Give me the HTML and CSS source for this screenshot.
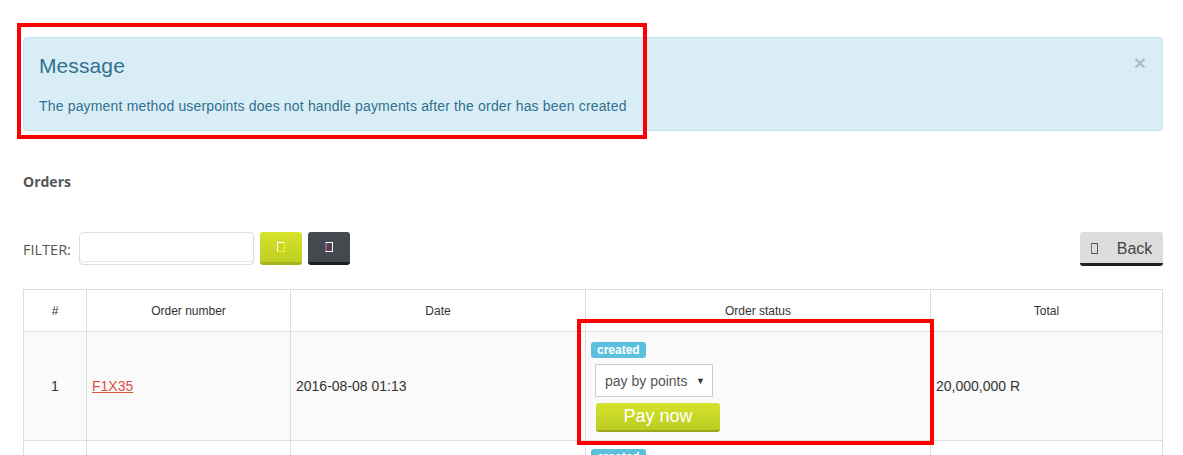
FILE: index.html
```html
<!DOCTYPE html>
<html>
<head>
<meta charset="utf-8">
<link rel="stylesheet" href="styles.css">
</head>
<body>
<div class="page">
  <div class="alert">
    <button class="close">×</button>
    <h4 class="alert-title">Message</h4>
    <p class="alert-text">The payment method userpoints does not handle payments after the order has been created</p>
    <div class="mark mark-alert"></div>
  </div>

  <h3 class="section-title">Orders</h3>

  <div class="toolbar">
    <div class="filter">
      <label class="filter-label">FILTER:</label>
      <input class="filter-input" type="text">
      <button class="btn btn-lime btn-icon"><span class="tofu tofu-light"></span></button>
      <button class="btn btn-dark btn-icon"><span class="tofu tofu-dark"></span></button>
    </div>
    <button class="btn btn-back"><span class="tofu tofu-back"></span><span>Back</span></button>
  </div>

  <table class="orders">
    <thead>
      <tr>
        <th class="c-num">#</th>
        <th class="c-order">Order number</th>
        <th class="c-date">Date</th>
        <th class="c-status">Order status</th>
        <th class="c-total">Total</th>
      </tr>
    </thead>
    <tbody>
      <tr class="row1">
        <td class="center">1</td>
        <td><a class="order-link" href="#">F1X35</a></td>
        <td>2016-08-08 01:13</td>
        <td class="status-cell">
          <div class="status-wrap">
            <span class="badge">created</span>
            <div class="select"><span>pay by points</span><span class="caret">▼</span></div>
            <button class="btn-pay">Pay now</button>
            <div class="mark mark-status"></div>
          </div>
        </td>
        <td>20,000,000 R</td>
      </tr>
      <tr class="row2">
        <td></td>
        <td></td>
        <td></td>
        <td class="status-cell"><div class="status-wrap2"><span class="badge">created</span></div></td>
        <td></td>
      </tr>
    </tbody>
  </table>
</div>
</body>
</html>
```

FILE: styles.css
```css
html, body {
  margin: 0;
  padding: 0;
  background: #fff;
  overflow: hidden;
  height: 455px;
}
body {
  font-family: "Liberation Sans", Arial, sans-serif;
  color: #333;
}
.page {
  padding: 37px 20px 0 23px;
}
.alert {
  position: relative;
  background: #d9edf7;
  border: 1px solid #bce8f1;
  border-radius: 4px;
  padding: 15px;
  color: #31708f;
  height: 62px;
}
.alert-title {
  margin: 0;
  font-size: 21px;
  font-weight: normal;
  line-height: 26px;
  letter-spacing: 0.1px;
}
.alert-text {
  margin: 17px 0 0;
  font-size: 14px;
  line-height: 20px;
  letter-spacing: 0.17px;
}
.close {
  position: absolute;
  right: 16px;
  top: 14px;
  border: 0;
  background: none;
  padding: 0;
  font-family: "Liberation Sans", Arial, sans-serif;
  font-size: 21px;
  font-weight: bold;
  line-height: 22px;
  color: #000;
  opacity: 0.2;
}
.mark {
  position: absolute;
  border: 4px solid #ff0000;
  pointer-events: none;
}
.mark-alert {
  left: -7px;
  top: -15px;
  width: 622px;
  height: 108px;
}
.section-title {
  margin: 41px 0 0;
  font-family: "Open Sans", sans-serif;
  font-size: 14px;
  font-weight: bold;
  color: #555;
  line-height: 20px;
}
.toolbar {
  display: flex;
  justify-content: space-between;
  align-items: flex-start;
  margin-top: 40px;
}
.filter {
  display: flex;
  align-items: center;
}
.filter-label {
  font-family: "Open Sans", sans-serif;
  font-size: 14.5px;
  color: #555;
  margin-right: 8px;
  margin-top: 2px;
}
.filter-input {
  width: 175px;
  height: 33px;
  box-sizing: border-box;
  border: 1px solid #ddd;
  border-radius: 4px;
  box-shadow: 0 -2px 0 #fff inset, 0 -3px 0 #e5e5e5 inset;
  margin: 0;
  padding: 0 6px;
}
.btn {
  border: 0;
  border-radius: 3px;
  padding: 0;
  margin: 0;
  cursor: pointer;
  display: flex;
  align-items: center;
  justify-content: center;
}
.btn-icon {
  width: 42px;
  height: 33px;
  box-sizing: border-box;
  margin-left: 6px;
}
.btn-lime {
  background: linear-gradient(#d6e32b, #bfcf22);
  border-bottom: 3px solid #a5b31a;
}
.btn-dark {
  background: #45484f;
  border-bottom: 3px solid #1d1f23;
}
.tofu {
  display: inline-block;
  width: 8px;
  height: 10px;
  box-sizing: border-box;
}
.tofu-light {
  border: 1px solid #fff;
  border-right-color: #f7f23a;
  border-bottom-color: #f5ee3a;
}
.tofu-dark {
  border: 1px solid #fff;
  border-left-color: #5e6ae0;
  box-shadow: inset 1px 0 0 #d04444;
}
.btn-back {
  width: 83px;
  height: 34px;
  box-sizing: border-box;
  background: #ddd;
  border-bottom: 3px solid #1f1f1f;
  font-family: "Liberation Sans", Arial, sans-serif;
  font-size: 16px;
  color: #444;
  gap: 19px;
  padding-top: 2px;
}
.tofu-back {
  width: 7px;
  height: 11px;
  border: 1px solid #555;
  border-left-color: #8a6a4a;
}
.orders {
  margin-top: 23px;
  width: 1140px;
  border-collapse: collapse;
  font-size: 12px;
  table-layout: fixed;
}
.orders th, .orders td {
  border: 1px solid #ddd;
  padding: 0 5px;
}
.orders th {
  height: 41px;
  font-weight: normal;
  color: #333;
  text-align: center;
}
.c-num { width: 52px; }
.c-order { width: 193px; }
.c-date { width: 284px; }
.c-status { width: 334px; }
.row1 td {
  background: #fafafa;
  height: 108px;
  font-size: 14px;
  color: #333;
}
.row1 td.center { text-align: center; }
.order-link {
  color: #e0523f;
  text-decoration: underline;
}
.status-cell {
  vertical-align: top;
}
.status-wrap {
  position: relative;
  padding-top: 9px;
}
.status-wrap2 {
  padding-top: 8px;
}
.badge {
  display: inline-block;
  background: #5bc0de;
  color: #fff;
  font-size: 12px;
  font-weight: bold;
  line-height: 16px;
  padding: 0 6px;
  border-radius: 3px;
}
.select {
  margin: 6px 0 0 4px;
  width: 118px;
  height: 33px;
  box-sizing: border-box;
  border: 1px solid #ccc;
  background: #fff;
  display: flex;
  align-items: center;
  justify-content: space-between;
  padding: 0 7px 0 9px;
  font-size: 14px;
  color: #555;
}
.caret {
  font-size: 9px;
  color: #333;
}
.btn-pay {
  display: block;
  margin: 6px 0 0 5px;
  width: 124px;
  height: 29px;
  box-sizing: border-box;
  border: 0;
  border-radius: 3px;
  background: linear-gradient(#d5e22c, #bccd22);
  border-bottom: 2px solid #9aa81c;
  color: #fff;
  font-family: "Liberation Sans", Arial, sans-serif;
  font-size: 18px;
  padding: 0;
}
.mark-status {
  left: -14px;
  top: -13px;
  width: 349px;
  height: 118px;
}
.row2 td {
  height: 30px;
  background: #fff;
}
```
